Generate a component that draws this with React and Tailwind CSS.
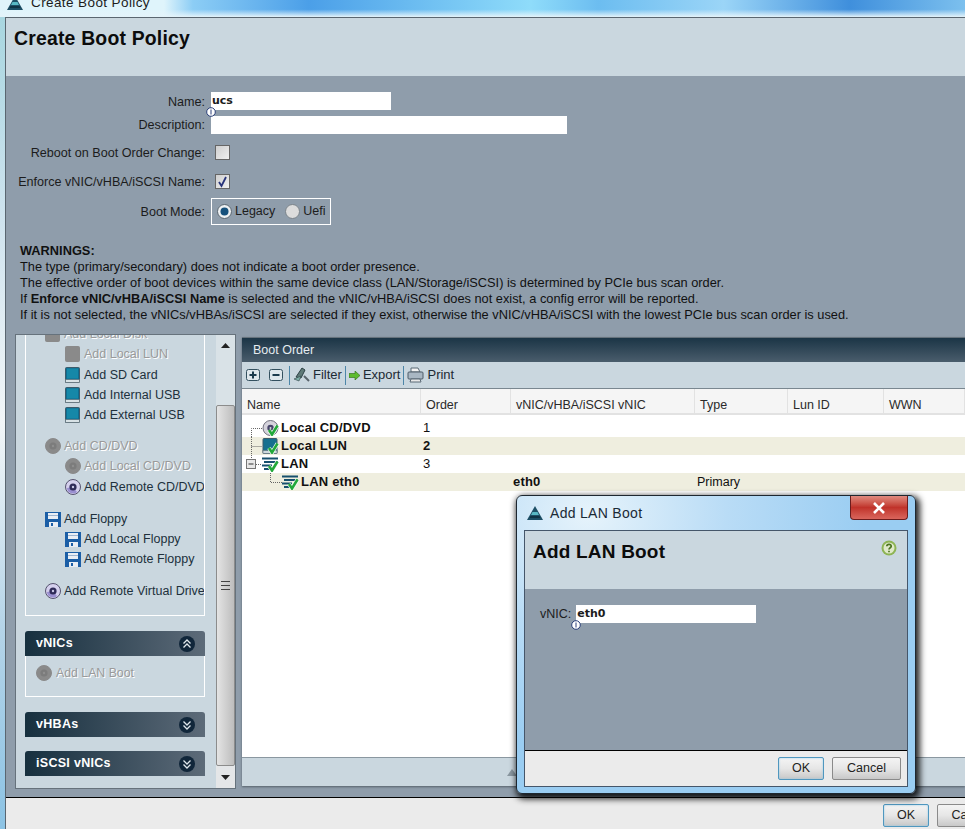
import React from 'react';

const logo = (
  <svg width="16" height="14" viewBox="0 0 16 14" className="shrink-0">
    <path d="M8 0 L16 14 H0 Z" fill="#1d4f66" />
    <path d="M5.5 6 H10.5 L12 9 H4 Z" fill="#58b8c4" />
    <path d="M3.5 10 H12.5 L13.5 12 H2.5 Z" fill="#0f3345" />
  </svg>
);

function Disc({ off }) {
  return (
    <svg width="16" height="16" viewBox="0 0 16 16" className="shrink-0">
      <circle cx="8" cy="8" r="7.5" fill={off ? '#8a8a8a' : '#d5d0ee'} stroke={off ? '#8a8a8a' : '#55526e'} />
      {!off && <path d="M2 9 A6 6 0 0 0 12 13 L8 8 Z" fill="#9a8fd0" />}
      <circle cx="8" cy="8" r="3.6" fill={off ? '#7c7c7c' : '#2f2a58'} />
      <circle cx="8" cy="8" r="1.2" fill={off ? '#8f8f8f' : '#c9c6e6'} />
    </svg>
  );
}

function Drive({ off }) {
  return (
    <svg width="15" height="16" viewBox="0 0 15 16" className="shrink-0 mr-[1px]">
      <rect x="0.5" y="0.5" width="14" height="15" rx="1" fill={off ? '#8a8a8a' : '#0f6d90'} stroke={off ? '#8a8a8a' : '#3d5b6b'} />
      {!off && <rect x="2" y="1.5" width="11" height="10" fill="#1688a8" />}
      {!off && <rect x="0.5" y="12.5" width="14" height="3" fill="#d8e2e6" stroke="#5d6d76" strokeWidth="0.7" />}
    </svg>
  );
}

function Floppy() {
  return (
    <svg width="16" height="15" viewBox="0 0 16 15" className="shrink-0">
      <rect width="16" height="15" fill="#1b5ea6" />
      <rect x="3" y="1" width="10" height="6" fill="#e9eef5" />
      <rect x="3" y="3" width="10" height="1" fill="#9db4d0" />
      <rect x="4" y="10" width="9" height="5" fill="#e9eef5" />
      <rect x="6" y="11" width="2" height="3" fill="#1b5ea6" />
    </svg>
  );
}

// green tick over the table icons
const tick = (
  <>
    <path d="M7 10 L10 14.5 L15.5 5.5" fill="none" stroke="#f4fff4" strokeWidth="4" />
    <path d="M7 10 L10 14.5 L15.5 5.5" fill="none" stroke="#22a83a" strokeWidth="2.6" />
  </>
);

function TableIcon({ kind }) {
  return (
    <svg width="17" height="16" viewBox="0 0 17 16" className="shrink-0 mr-[2px]">
      {kind === 'cd' && (
        <>
          <circle cx="8.5" cy="8" r="7.5" fill="#d5d3dc" stroke="#6f6f7c" />
          <circle cx="8.5" cy="8" r="3.2" fill="#47456a" />
          <circle cx="8.5" cy="8" r="1" fill="#d5d3dc" />
        </>
      )}
      {kind === 'lun' && (
        <>
          <rect x="1" y="0.5" width="14" height="15" rx="1" fill="#16708f" stroke="#3d5b6b" />
          <rect x="1" y="12.5" width="14" height="3" fill="#cdd8dd" stroke="#5d6d76" strokeWidth="0.6" />
        </>
      )}
      {kind === 'lan' && (
        <path d="M0 2.5 H16 M2 6 H16 M0 9.5 H10 M2 13 H8" stroke="#17506e" strokeWidth="2.2" />
      )}
      {tick}
    </svg>
  );
}

function TreeLead({ type }) {
  if (type === 'nested') {
    return (
      <svg width="40" height="18" className="shrink-0">
        <path d="M28.5 0 V9.5 H40" fill="none" stroke="#666" strokeDasharray="1 1" />
      </svg>
    );
  }
  return (
    <svg width="20" height="18" className="shrink-0">
      {type === 'first' && <path d="M9.5 18 V9.5 H20" fill="none" stroke="#666" strokeDasharray="1 1" />}
      {type === 'mid' && <path d="M9.5 0 V18 M9.5 9.5 H20" fill="none" stroke="#666" strokeDasharray="1 1" />}
      {type === 'lan' && (
        <>
          <path d="M9.5 0 V4 M14 9.5 H20" fill="none" stroke="#666" strokeDasharray="1 1" />
          <rect x="4.5" y="4.5" width="9" height="9" fill="#e8e8e8" stroke="#777" />
          <path d="M6.5 9 H11.5" stroke="#333" />
        </>
      )}
    </svg>
  );
}

function Chevrons({ up }) {
  return (
    <svg width="18" height="18" viewBox="0 0 18 18">
      <circle cx="9" cy="9" r="8" fill="#10263a" />
      <path d={up ? 'M5.5 8.5 L9 5 L12.5 8.5 M5.5 12.5 L9 9 L12.5 12.5' : 'M5.5 5.5 L9 9 L12.5 5.5 M5.5 9.5 L9 13 L12.5 9.5'} fill="none" stroke="#dfe7ec" strokeWidth="1.3" />
    </svg>
  );
}

function Section({ title, up, className }) {
  return (
    <div className={`flex items-center justify-between h-[25px] pl-[11px] pr-[9px] rounded-t-[3px] bg-linear-to-r from-[#17303f] to-[#5d6b79] text-white font-bold text-[12.5px] tracking-[0.3px] ${className || ''}`}>
      {title}
      <Chevrons up={up} />
    </div>
  );
}

function ListRow({ icon, label, off, sub, className }) {
  return (
    <div className={`flex items-center h-[20px] gap-[3px] whitespace-nowrap text-[12.5px] ${sub ? 'pl-[39px]' : 'pl-[19px]'} ${off ? 'text-[#9a9a9a] [text-shadow:1px_1px_0_#ffffff]' : 'text-[#20303c]'} ${className || ''}`}>
      {icon}
      {label}
    </div>
  );
}

function Btn({ children, primary, className }) {
  return (
    <div className={`flex items-center justify-center h-[23px] rounded-[2px] border text-[12.5px] text-[#222] bg-linear-to-b from-[#f4f4f4] via-[#e6e6e6] to-[#c8c8c8] ${primary ? 'border-[#4f97bf] shadow-[inset_0_0_2px_#8cc8e8]' : 'border-[#8a8a8a]'} ${className || ''}`}>
      {children}
    </div>
  );
}

const infoDot = (
  <svg width="10" height="10" viewBox="0 0 10 10" className="absolute -left-[5px] -bottom-[7px]">
    <circle cx="5" cy="5" r="4.3" fill="#fff" stroke="#2a3f7a" />
    <path d="M5 2.5 V7.5" stroke="#2a3f7a" />
  </svg>
);

const cols = ['w-[179px]', 'w-[90px]', 'w-[184px]', 'w-[93px]', 'w-[96px]', 'w-[81px]'];

const treeRows = [
  { lead: 'first', icon: 'cd', name: 'Local CD/DVD', order: '1' },
  { lead: 'mid', icon: 'lun', name: 'Local LUN', order: '2', shade: true, strong: true },
  { lead: 'lan', icon: 'lan', name: 'LAN', order: '3' },
  { lead: 'nested', icon: 'lan', name: 'LAN eth0', vnic: 'eth0', type: 'Primary', shade: true },
];

export default function App() {
  return (
    <div className="relative flex flex-col w-[965px] h-[836px] overflow-hidden bg-white font-['Liberation_Sans',sans-serif] text-[#1c1c1c]">
      {/* window chrome */}
      <div className="flex items-start h-[17px] pl-[7px] overflow-hidden bg-[linear-gradient(180deg,transparent_55%,#e4f3fa_100%),linear-gradient(90deg,#dff4fb_0%,#dff4fb_17%,#8ccdf5_20%,#4b9fe8_32%,#8fdcfa_55%,#6cbdf0_62%,#9bd5f7_75%,#3f8fdc_88%,#7cc0ee_100%)]">
        <div className="-mt-[7px] flex items-center gap-[8px] text-[13.5px] tracking-[0.4px]">
          {logo}
          Create Boot Policy
        </div>
      </div>

      <div className="flex h-[812px]">
        <div className="w-[5px] shrink-0 bg-[linear-gradient(180deg,#a8d6e0_0%,#cfe3ee_25%,#f2f6f8_50%,#b5d4e8_75%,#8cc3e4_100%)]" />
        <div className="flex flex-col flex-1 min-w-0 border-l border-t border-[#5a6670]">
          <div className="h-[58px] shrink-0 bg-[#cad7df] pl-[8px] pt-[6px] text-[19.4px] font-bold text-[#0c0c0c] tracking-[0.2px]">
            Create Boot Policy
          </div>

          <div className="flex flex-col h-[722px] shrink-0 bg-[#8f9dab] border-b border-black pt-[16px]">
            <div className="flex items-center h-[18px]">
              <div className="w-[205px] text-right text-[12.6px] pr-[6px] pt-[2px]">Name:</div>
              <div className="relative w-[180px] h-[18px] bg-white pl-[1px] text-[11px] font-bold font-['DejaVu_Sans',sans-serif] leading-[18px]">
                ucs
                {infoDot}
              </div>
            </div>
            <div className="flex items-center h-[18px] mt-[6px]">
              <div className="w-[205px] text-right text-[12.6px] pr-[6px]">Description:</div>
              <div className="w-[356px] h-[18px] bg-white" />
            </div>
            <div className="flex items-center h-[16px] mt-[10px]">
              <div className="w-[205px] text-right text-[12.6px] pr-[6px] pt-[2px]">Reboot on Boot Order Change:</div>
              <div className="ml-[4px] w-[15px] h-[15px] border border-[#666] bg-linear-to-br from-[#cfcfcf] to-[#f0f0f0]" />
            </div>
            <div className="flex items-center h-[16px] mt-[13px]">
              <div className="w-[205px] text-right text-[12.6px] pr-[6px] pt-[2px]">Enforce vNIC/vHBA/iSCSI Name:</div>
              <div className="ml-[4px] w-[15px] h-[15px] border border-[#666] bg-linear-to-br from-[#cfcfcf] to-[#f0f0f0]">
                <svg width="13" height="13" viewBox="0 0 13 13">
                  <path d="M3 7 L5.5 11 L10 2" fill="none" stroke="#27337a" strokeWidth="1.8" />
                </svg>
              </div>
            </div>
            <div className="flex items-center h-[27px] mt-[9px]">
              <div className="w-[205px] text-right text-[12.6px] pr-[6px] pt-[2px]">Boot Mode:</div>
              <div className="flex items-center w-[120px] h-[27px] border border-white pl-[5px] text-[12.5px]">
                <svg width="15" height="15" viewBox="0 0 15 15" className="mr-[3px]">
                  <circle cx="7.5" cy="7.5" r="7" fill="#eef1f3" stroke="#5a6670" />
                  <circle cx="7.5" cy="7.5" r="4" fill="#16517c" />
                </svg>
                Legacy
                <svg width="15" height="15" viewBox="0 0 15 15" className="ml-[10px] mr-[3px]">
                  <circle cx="7.5" cy="7.5" r="7" fill="#dcdcdc" stroke="#7a838a" />
                </svg>
                Uefi
              </div>
            </div>

            <div className="pl-[14px] mt-[18px] text-[12.8px] leading-[16px] text-[#111] whitespace-nowrap">
              <div className="font-bold">WARNINGS:</div>
              <div>The type (primary/secondary) does not indicate a boot order presence.</div>
              <div>The effective order of boot devices within the same device class (LAN/Storage/iSCSI) is determined by PCIe bus scan order.</div>
              <div>If <b>Enforce vNIC/vHBA/iSCSI Name</b> is selected and the vNIC/vHBA/iSCSI does not exist, a config error will be reported.</div>
              <div>If it is not selected, the vNICs/vHBAs/iSCSI are selected if they exist, otherwise the vNIC/vHBA/iSCSI with the lowest PCIe bus scan order is used.</div>
            </div>

            <div className="flex mt-[11px] gap-[6px] pl-[9px]">
              {/* left action list */}
              <div className="flex w-[221px] h-[455px] shrink-0 border border-[#66727c] bg-[#cad7df]">
                <div className="flex flex-col w-[200px] pl-[9px] pr-[11px]">
                  <div className="h-[281px] border-x border-b border-white overflow-hidden">
                    <div className="-mt-[11px]">
                      <ListRow off icon={<Drive off />} label="Add Local Disk" />
                      <ListRow off sub icon={<Drive off />} label="Add Local LUN" />
                      <ListRow sub icon={<Drive />} label="Add SD Card" className="mt-[1px]" />
                      <ListRow sub icon={<Drive />} label="Add Internal USB" />
                      <ListRow sub icon={<Drive />} label="Add External USB" />
                      <ListRow off icon={<Disc off />} label="Add CD/DVD" className="mt-[11px]" />
                      <ListRow off sub icon={<Disc off />} label="Add Local CD/DVD" />
                      <ListRow sub icon={<Disc />} label="Add Remote CD/DVD" className="mt-[1px]" />
                      <ListRow icon={<Floppy />} label="Add Floppy" className="mt-[12px]" />
                      <ListRow sub icon={<Floppy />} label="Add Local Floppy" />
                      <ListRow sub icon={<Floppy />} label="Add Remote Floppy" />
                      <ListRow icon={<Disc />} label="Add Remote Virtual Drive" className="mt-[12px]" />
                    </div>
                  </div>
                  <Section title="vNICs" up className="mt-[15px]" />
                  <div className="h-[41px] border-x border-b border-white pt-[8px]">
                    <div className="flex items-center gap-[4px] pl-[10px] text-[12.3px] text-[#9a9a9a] [text-shadow:1px_1px_0_#ffffff]">
                      <Disc off />
                      Add LAN Boot
                    </div>
                  </div>
                  <Section title="vHBAs" className="mt-[15px]" />
                  <Section title="iSCSI vNICs" className="mt-[14px]" />
                </div>
                <div className="flex flex-col w-[20px] bg-[#d9e2e7]">
                  <div className="flex items-center justify-center h-[20px] mb-[50px]">
                    <svg width="9" height="5"><path d="M0 5 L4.5 0 L9 5 Z" fill="#222" /></svg>
                  </div>
                  <div className="flex flex-col items-center justify-center flex-1 border border-[#8c8c8c] rounded-[2px] bg-linear-to-r from-[#e4e4e4] to-[#bdbdbd]">
                    <div className="w-[9px] h-[9px] border-y border-[#444] flex items-center">
                      <div className="w-full h-px bg-[#444]" />
                    </div>
                  </div>
                  <div className="flex items-center justify-center h-[22px] bg-[#e4e6e8]">
                    <svg width="9" height="5"><path d="M0 0 L4.5 5 L9 0 Z" fill="#222" /></svg>
                  </div>
                </div>
              </div>

              {/* boot order table */}
              <div className="flex flex-col flex-1 min-w-0 h-[449px] mt-[3px] border-t border-[#66727c] bg-[#cad7df] shadow-[0_1px_2px_#55606a]">
                <div className="h-[24px] shrink-0 pl-[11px] text-[12.5px] leading-[24px] text-[#e6ecf0] bg-linear-to-b from-[#1b3546] to-[#4a5d6c]">
                  Boot Order
                </div>
                <div className="flex items-center h-[27px] shrink-0 pl-[4px] text-[13px] text-[#1c2a34] border-b border-[#7a8790]">
                  <svg width="14" height="14" viewBox="0 0 14 14">
                    <rect x="0.5" y="1.5" width="13" height="11" rx="2" fill="#dfe7ec" stroke="#33505f" />
                    <path d="M3.5 7 H10.5 M7 3.5 V10.5" stroke="#1b3a4c" strokeWidth="2" />
                  </svg>
                  <svg width="14" height="14" viewBox="0 0 14 14" className="ml-[9px]">
                    <rect x="0.5" y="1.5" width="13" height="11" rx="2" fill="#dfe7ec" stroke="#33505f" />
                    <path d="M3.5 7 H10.5" stroke="#1b3a4c" strokeWidth="2" />
                  </svg>
                  <div className="w-px h-[19px] bg-[#4d86a8] ml-[6px] mr-[3px]" />
                  <svg width="17" height="16" viewBox="0 0 17 16" className="mr-[3px]">
                    <path d="M3 10 L9 1 L12 3 L8 11 Z" fill="#5f7a78" stroke="#2d4145" />
                    <path d="M1 12 L8 9 L6 14 Z" fill="#7fb0a8" stroke="#2d4145" strokeWidth="0.6" />
                    <path d="M11 9 L16 14" stroke="#59646b" strokeWidth="2" />
                  </svg>
                  Filter
                  <div className="w-px h-[19px] bg-[#4d86a8] mx-[3px]" />
                  <svg width="11" height="9" viewBox="0 0 11 9" className="mr-[3px]">
                    <path d="M0 2.5 H6 V0 L11 4.5 L6 9 V6.5 H0 Z" fill="#5dbb2f" stroke="#2e6a12" strokeWidth="0.6" />
                  </svg>
                  Export
                  <div className="w-px h-[19px] bg-[#4d86a8] mx-[3px]" />
                  <svg width="17" height="16" viewBox="0 0 17 16" className="mr-[3px]">
                    <path d="M4 1 H11 L13 5 H4 Z" fill="#f3f3f3" stroke="#5b6a76" />
                    <rect x="1" y="5" width="15" height="7" rx="1" fill="#a9b7c3" stroke="#4e5d69" />
                    <path d="M4 12 H13 L14 15 H3 Z" fill="#e8e8e8" stroke="#5b6a76" />
                  </svg>
                  Print
                </div>
                <div className="flex flex-col flex-1 min-h-0 bg-white overflow-hidden">
                  <div className="flex h-[26px] shrink-0 text-[12.5px] text-[#2a2a2a] bg-[#f5f5f5] border-b-2 border-[#e2e2e2]">
                    {['Name', 'Order', 'vNIC/vHBA/iSCSI vNIC', 'Type', 'Lun ID', 'WWN'].map((h, i) => (
                      <div key={h} className={`${cols[i]} shrink-0 pl-[5px] leading-[33px] border-r border-[#e2e2e2] whitespace-nowrap`}>{h}</div>
                    ))}
                  </div>
                  <div className="flex flex-col pt-[4px] text-[13px] text-[#111]">
                    {treeRows.map((r) => (
                      <div key={r.name} className={`flex items-center h-[18px] ${r.shade ? 'bg-[#efeedf]' : ''}`}>
                        <div className={`${cols[0]} shrink-0 flex items-center font-bold tracking-[0.2px]`}>
                          <TreeLead type={r.lead} />
                          <TableIcon kind={r.icon} />
                          {r.name}
                        </div>
                        <div className={`${cols[1]} shrink-0 pl-[2px] ${r.strong ? 'font-bold' : ''}`}>{r.order}</div>
                        <div className={`${cols[2]} shrink-0 pl-[2px] font-bold tracking-[0.2px]`}>{r.vnic}</div>
                        <div className={`${cols[3]} shrink-0 pl-[2px] text-[12.5px]`}>{r.type}</div>
                      </div>
                    ))}
                  </div>
                </div>
                <div className="flex items-center h-[29px] shrink-0 pl-[265px] border-t border-[#8a97a0] bg-[#cad7df]">
                  <svg width="10" height="7"><path d="M0 7 L5 0 L10 7 Z" fill="#8a97a0" /></svg>
                </div>
              </div>
            </div>
          </div>

          <div className="flex flex-1 justify-end gap-[8px] pt-[6px] bg-[#ebebeb] overflow-hidden">
            <Btn primary className="w-[46px] shrink-0">OK</Btn>
            <Btn className="w-[68px] shrink-0 -mr-[40px]">Cancel</Btn>
          </div>
        </div>
      </div>

      {/* Add LAN Boot dialog */}
      <div className="absolute left-[516px] top-[495px] flex flex-col w-[400px] h-[299px] rounded-[6px] border border-[#1d2730] bg-[radial-gradient(ellipse_at_18%_6%,#e6f3fb_0%,#b9dcf6_30%,#9acdf2_60%)] shadow-[2px_3px_6px_2px_rgba(0,0,0,0.85)] px-[7px] pb-[6px]">
        <div className="flex items-start justify-between h-[34px] shrink-0">
          <div className="flex items-center gap-[7px] h-[34px] pl-[3px] text-[14px] text-[#1a2a36] tracking-[0.3px]">
            {logo}
            Add LAN Boot
          </div>
          <div className="flex items-center justify-center w-[58px] h-[24px] rounded-b-[4px] border border-[#6b1c1c] border-t-0 bg-linear-to-b from-[#e08a80] via-[#c0322a] to-[#d9655c]">
            <svg width="18" height="12" viewBox="0 0 18 12">
              <path d="M4 1 L14 11 M14 1 L4 11" stroke="#fff" strokeWidth="2.6" />
            </svg>
          </div>
        </div>
        <div className="flex flex-col flex-1 border border-[#45566a]">
          <div className="flex justify-between h-[58px] shrink-0 bg-[#cad7df] pl-[8px] pt-[7px] pr-[10px] text-[19px] font-bold text-[#0c0c0c] tracking-[0.2px]">
            Add LAN Boot
            <svg width="16" height="16" viewBox="0 0 16 16" className="mt-[2px]">
              <circle cx="8" cy="8" r="7.5" fill="#8db454" />
              <circle cx="8" cy="8" r="5.5" fill="#dfe9c9" />
              <path d="M5.8 6.2 C6 3.6 10.4 3.8 10.2 6.4 C10.1 7.8 8 7.8 8 9.6 M8 10.8 V12.2" fill="none" stroke="#4c7420" strokeWidth="1.7" />
            </svg>
          </div>
          <div className="flex items-start flex-1 bg-[#8f9dab] border-b border-black pt-[16px] pl-[15px] text-[12.5px]">
            <div className="h-[18px] leading-[18px] mr-[5px]">vNIC:</div>
            <div className="relative w-[180px] h-[18px] bg-white pl-[1px] text-[11px] font-bold font-['DejaVu_Sans',sans-serif] leading-[18px]">
              eth0
              {infoDot}
            </div>
          </div>
          <div className="flex justify-end gap-[8px] h-[35px] shrink-0 pt-[6px] pr-[6px] bg-[#ebebeb]">
            <Btn primary className="w-[46px]">OK</Btn>
            <Btn className="w-[69px]">Cancel</Btn>
          </div>
        </div>
      </div>
    </div>
  );
}
